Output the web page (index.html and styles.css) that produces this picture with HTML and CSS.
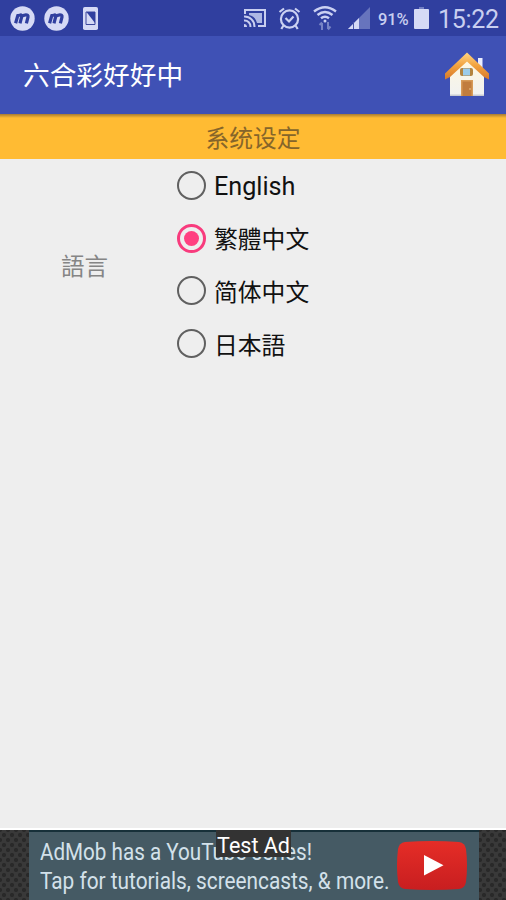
FILE: index.html
```html
<!DOCTYPE html>
<html lang="zh-Hant">
<head>
<meta charset="utf-8">
<title>六合彩好好中</title>
<link rel="stylesheet" href="styles.css">
</head>
<body>
<div class="screen">
  <header class="status">
    <svg class="app-badge" viewBox="0 0 25 25"><circle cx="12.5" cy="12.5" r="12.2"/><path d="M5.6 17.3 8 8.8M7.2 10.4C9 8.8 12.4 8 11.6 11L10 17.3M11.3 10.7C13.5 8.6 18.8 7.8 18 11L16.4 17.3"/></svg>
    <svg class="app-badge" viewBox="0 0 25 25"><circle cx="12.5" cy="12.5" r="12.2"/><path d="M5.6 17.3 8 8.8M7.2 10.4C9 8.8 12.4 8 11.6 11L10 17.3M11.3 10.7C13.5 8.6 18.8 7.8 18 11L16.4 17.3"/></svg>
    <svg class="sim" viewBox="0 0 15 23"><rect width="15" height="23" rx="1.8" fill="#d6daf5"/><path d="M3 5H12V17.500H3Z" fill="#d6daf5" stroke="#3c479c" stroke-width="1"/><path d="M3.500 5H12V16Z" fill="#303f9f"/></svg>
    <span class="spacer"></span>
    <svg class="cast" viewBox="0 0 24 20" fill="none" stroke="#c9cff0" stroke-width="2"><path d="M2 6V2H22V18H15"/><path d="M6 5H19V15H14Q12 8 6 7Z" fill="#aeb8e4" stroke="none"/><path d="M1 8.500A10 10 0 0 1 11.500 19M1 12.500A6 6 0 0 1 7.500 19"/><path d="M1 16V19H4A3 3 0 0 0 1 16Z" fill="#c9cff0" stroke="none"/></svg>
    <svg class="alarm" viewBox="0 0 23 23" fill="none" stroke="#cbd1f2" stroke-width="2.2"><circle cx="11.5" cy="12" r="8.6"/><path d="M1.500 5 6 1.500M17 1.500 21.500 5M5.500 18.500 3.300 22M17.500 18.500 19.700 22M7.500 11 11 14.500 15.500 9.500"/></svg>
    <svg class="wifi" viewBox="0 0 24 25" fill="none" stroke="#cbd1f2" stroke-width="2.4"><path d="M1 5.500Q12-3 23 5.500M4.500 9Q12 3 19.500 9M8 12.300Q12 9 16 12.300"/><circle cx="12" cy="15" r="1.5" fill="#cbd1f2" stroke="none"/><path d="M9 24V17M6.500 19 9 16.500M15 16V23M17.500 20.500 15 23.500" stroke="#7783c5" stroke-width="2"/></svg>
    <svg class="signal" viewBox="0 0 22 22"><path d="M0 22 22 0V22Z" fill="#6774bd"/><path d="M0 22 11 11V22Z" fill="#d5daf5"/><path d="M5.500 15V22" stroke="#4956aa"/></svg>
    <span class="percent">91%</span>
    <svg class="battery" viewBox="0 0 15 22"><path d="M5 0H10V3H5Z" fill="#737fc3"/><rect y="2" width="15" height="20" rx="1" fill="#d6daf5"/></svg>
    <span class="clock">15:22</span>
  </header>

  <div class="appbar">
    <h1>六合彩好好中</h1>
    <svg class="home" viewBox="0 0 46 46">
      <defs>
        <linearGradient id="roof" x2="0" y2="1"><stop stop-color="#ffd584"/><stop offset=".5" stop-color="#f2a13c"/><stop offset="1" stop-color="#d6782c"/></linearGradient>
        <linearGradient id="wall" x2="0" y2="1"><stop stop-color="#fff8df"/><stop offset="1" stop-color="#f1f2f1"/></linearGradient>
      </defs>
      <path d="M34 6H38.500V21L34 16Z" fill="#eceeff"/>
      <path d="M6 21 23 6 40 21V43H6Z" fill="url(#wall)"/>
      <path d="M6 42.500H40V44H6Z" fill="#c8cbd3"/>
      <path d="M23 .5 45 21.500V27.500L40 25 23 9.500 6 25 1 27.500V21.500Z" fill="url(#roof)"/>
      <rect x="16" y="16" width="13" height="8" rx="2" fill="#b3843f"/>
      <rect x="19" y="16.500" width="7" height="7" fill="#9acbe9"/>
      <path d="M17 28H29V44H17Z" fill="#d79b58"/><path d="M18.500 29.500H27.500V44H18.500Z" fill="#c17d3e"/>
      <circle cx="26" cy="37" r=".7" fill="#ffe1a0"/>
    </svg>
  </div>

  <div class="section">系统设定</div>

  <main class="setting">
    <div class="label">語言</div>
    <div class="options">
      <div class="option"><i class="radio"></i><span class="latin">English</span></div>
      <div class="option"><i class="radio on"></i><span class="hant">繁體中文</span></div>
      <div class="option"><i class="radio"></i><span lang="zh-Hans">简体中文</span></div>
      <div class="option"><i class="radio"></i><span lang="ja">日本語</span></div>
    </div>
  </main>

  <footer class="ad">
    <div class="banner">
      <div class="copy"><span class="line one">AdMob has a YouTube series!</span><span class="line two">Tap for tutorials, screencasts, &amp; more.</span></div>
      <svg class="play" viewBox="0 0 70 49"><defs><linearGradient id="red" x2="0" y2="1"><stop stop-color="#e52d27"/><stop offset="1" stop-color="#c81e20"/></linearGradient></defs><path d="M8 1Q35-1 62 1Q68 2 69 8Q71 24 69 41Q68 47 62 48Q35 50 8 48Q2 47 1 41Q-1 24 1 8Q2 2 8 1Z" fill="url(#red)"/><path d="M27 14 46.500 24.300 27 34.500Z" fill="#fff"/></svg>
    </div>
    <div class="test">Test Ad</div>
  </footer>
</div>
</body>
</html>
```
FILE: styles.css
```css
* { box-sizing: border-box; }
body { margin: 0; font-family: Roboto, "Noto Sans CJK TC", sans-serif; }
.screen { width: 506px; height: 900px; display: flex; flex-direction: column; background: #eee; overflow: hidden; }
svg { display: block; flex: none; }

.status { height: 36px; flex: none; display: flex; align-items: center; background: #303f9f; padding: 0 7px 0 10px; color: #c9cff0; white-space: nowrap; }
.app-badge { width: 25px; height: 25px; margin-right: 9px; }
.app-badge circle { fill: #d6daf5; }
.app-badge path { fill: none; stroke: #303f9f; stroke-width: 3.2; }
.sim { width: 15px; height: 23px; margin-left: 5px; }
.spacer { flex: 1; }
.cast { width: 24px; height: 20px; margin-right: 11px; }
.alarm { width: 23px; height: 23px; margin-right: 12px; }
.wifi { width: 24px; height: 25px; margin-right: 11px; }
.signal { width: 22px; height: 22px; margin-right: 8px; }
.percent { width: 32px; font-size: 16.500px; font-weight: 500; letter-spacing: -.1px; margin-right: 4px; padding-top: 2px; }
.battery { width: 15px; height: 22px; margin-right: 9px; }
.clock { width: 61px; font-size: 25px; line-height: 36px; padding-top: 3px; letter-spacing: -.3px; }

.appbar { height: 78px; flex: none; background: #3f51b5; display: flex; align-items: center; justify-content: space-between; padding: 0 16px 0 23px; }
h1 { margin: 0; padding-top: 2px; color: #fff; font-size: 26.700px; line-height: 40px; font-weight: 400; }
.home { width: 46px; height: 46px; }

.section { height: 45px; flex: none; background: linear-gradient(#a77b33, #ffbb33 4px); color: #86652a; font-size: 23.800px; line-height: 45px; text-align: center; font-family: "Noto Sans CJK SC", sans-serif; }

.setting { display: grid; grid-template-columns: 177px 1fr; align-items: center; height: 211px; }
.label { color: #858585; font-size: 23.500px; padding: 0 0 0 61px; }
.option { height: 52.700px; display: flex; align-items: center; gap: 8px; font-size: 23.800px; color: #111; }
.option span { line-height: 36px; }
.option .latin { font-size: 25.200px; padding-top: 4px; }
.option .hant { padding-top: 4px; }
.option [lang="zh-Hans"] { font-family: "Noto Sans CJK SC", sans-serif; }
.option [lang="ja"] { font-family: "Noto Sans CJK JP", sans-serif; }
.radio { width: 29px; height: 29px; border: 2.500px solid #606060; border-radius: 50%; display: grid; place-items: center; }
.radio.on { border-color: #f83b7d; border-width: 3px; }
.radio.on::after { content: ""; width: 15px; height: 15px; border-radius: 50%; background: #ff4081; }

.ad { position: relative; height: 72px; margin-top: auto; flex: none; border-top: 2px solid #fff; padding: 0 27px 0 29px; background-color: #393939; background-image: radial-gradient(circle, #292929 1.800px, transparent 2.400px), radial-gradient(circle, #292929 1.800px, transparent 2.400px); background-size: 8px 10px; background-position: 0 0, 4px 5px; }
.banner { height: 70px; background: #455a64; border-top: 2px solid #173039; display: flex; justify-content: space-between; padding: 0 12px 0 11px; }
.copy { width: 352px; padding-top: 6px; }
.line { display: block; width: max-content; font-size: 23px; line-height: 29px; color: #d3e1ea; transform-origin: 0 50%; white-space: nowrap; }
.one { transform: scaleX(.897); }
.two { transform: scaleX(.905); }
.play { width: 70px; height: 49px; margin-top: 9px; }
.test { position: absolute; left: 216px; top: 0; width: 75px; height: 27px; background: #333; color: #fff; font-size: 21.500px; line-height: 31px; text-align: center; white-space: nowrap; }
```
